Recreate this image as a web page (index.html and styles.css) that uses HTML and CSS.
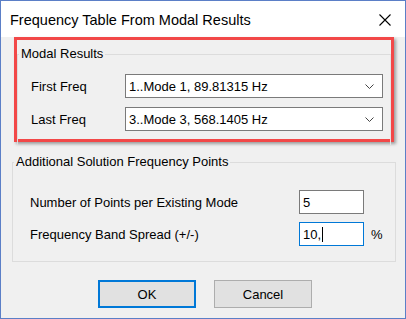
FILE: index.html
```html
<!DOCTYPE html>
<html lang="en">
<head>
    <meta charset="UTF-8">
    <title>Frequency Table From Modal Results</title>
    <link rel="stylesheet" href="styles.css">
</head>
<body>
    <div class="window">
        <div class="titlebar">
            <span class="title">Frequency Table From Modal Results</span>
            <svg class="close" width="12" height="12" viewBox="0 0 12 12">
                <path d="M0.5 0.5 L11.5 11.5 M11.5 0.5 L0.5 11.5" stroke="#000" stroke-width="1.1" fill="none"/>
            </svg>
        </div>

        <div class="content">
            <div class="highlight">
                <div class="group group-modal">
                    <div class="legend">Modal Results</div>
                    <div class="rows">
                        <div class="row">
                            <span class="label">First Freq</span>
                            <div class="combo">
                                <span>1..Mode 1, 89.81315 Hz</span>
                                <svg width="9" height="5" viewBox="0 0 9 5"><path d="M0.5 0.5 L4.5 4.5 L8.5 0.5" stroke="#444" fill="none"/></svg>
                            </div>
                        </div>
                        <div class="row">
                            <span class="label">Last Freq</span>
                            <div class="combo">
                                <span>3..Mode 3, 568.1405 Hz</span>
                                <svg width="9" height="5" viewBox="0 0 9 5"><path d="M0.5 0.5 L4.5 4.5 L8.5 0.5" stroke="#444" fill="none"/></svg>
                            </div>
                        </div>
                    </div>
                </div>
            </div>

            <div class="group group-points">
                <div class="legend">Additional Solution Frequency Points</div>
                <div class="rows">
                    <div class="row">
                        <span class="label wide">Number of Points per Existing Mode</span>
                        <div class="input">5</div>
                    </div>
                    <div class="row">
                        <span class="label wide">Frequency Band Spread (+/-)</span>
                        <div class="input focused">10,<span class="caret"></span></div>
                        <span class="unit">%</span>
                    </div>
                </div>
            </div>

            <div class="buttons">
                <div class="button default">OK</div>
                <div class="button">Cancel</div>
            </div>
        </div>
    </div>
</body>
</html>
```

FILE: styles.css
```css
body {
    margin: 0;
    font-family: "Liberation Sans", Arial, sans-serif;
    font-size: 13px;
    color: #000;
    background: #fff;
}
.window {
    width: 406px;
    height: 319px;
    box-sizing: border-box;
    border: 1px solid #5b7fc7;
    background-color: #f0f0f0;
}
.titlebar {
    height: 36px;
    background-color: #fff;
    display: flex;
    align-items: center;
    justify-content: space-between;
    padding: 0 14px 0 9px;
}
.title {
    font-size: 14.5px;
    padding-top: 1px;
}
.close {
    margin-top: 2px;
}
.highlight {
    margin-left: 13px;
    width: 380px;
    height: 105px;
    box-sizing: border-box;
    border: 3px solid #f24848;
    box-shadow: 2px 2px 3px rgba(0,0,0,0.35);
}
.group {
    border: 1px solid #dcdcdc;
}
.group-modal {
    margin-top: 14px;
    height: 90px;
    border-bottom: none;
    border-right-color: #e4e4e4;
}
.legend {
    width: fit-content;
    background-color: #f0f0f0;
    height: 16px;
    line-height: 16px;
    margin: -9px 0 0 1px;
    padding: 0 2px;
}
.rows {
    display: flex;
    flex-direction: column;
}
.group-modal .rows {
    padding: 12px 0 0 13px;
    gap: 9px;
}
.row {
    display: flex;
    align-items: center;
    height: 24px;
}
.label {
    width: 94px;
}
.combo {
    width: 258px;
    height: 24px;
    box-sizing: border-box;
    border: 1px solid #7a7a7a;
    background-color: #fff;
    display: flex;
    align-items: center;
    justify-content: space-between;
    padding: 0 8px 0 3px;
}
.group-points {
    margin: 20px 0 0 11px;
    width: 384px;
    height: 100px;
    box-sizing: border-box;
}
.group-points .rows {
    padding: 20px 0 0 17px;
    gap: 8px;
}
.label.wide {
    width: 269px;
}
.input {
    width: 65px;
    height: 24px;
    box-sizing: border-box;
    border: 1px solid #7a7a7a;
    background-color: #fff;
    display: flex;
    align-items: center;
    padding-left: 3px;
}
.input.focused {
    border-color: #0078d7;
}
.caret {
    display: inline-block;
    width: 1px;
    height: 15px;
    background-color: #000;
    margin-left: 1px;
}
.unit {
    margin-left: 7px;
}
.buttons {
    display: flex;
    justify-content: center;
    gap: 18px;
    margin-top: 18px;
    padding-left: 4px;
}
.button {
    width: 98px;
    height: 28px;
    box-sizing: border-box;
    border: 1px solid #adadad;
    background-color: #e1e1e1;
    display: flex;
    align-items: center;
    justify-content: center;
}
.button.default {
    border: 2px solid #0078d7;
}
```
